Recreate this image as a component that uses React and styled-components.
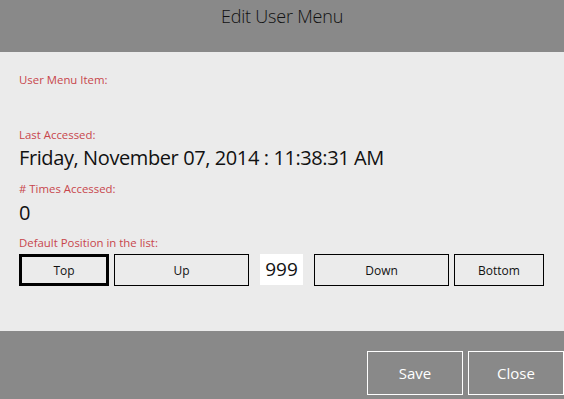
import React from "react";
import styled, { createGlobalStyle } from "styled-components";

const GlobalStyle = createGlobalStyle`
  html, body {
    margin: 0;
    padding: 0;
    background: #898989;
  }
  body {
    font-family: "Open Sans", "Noto Sans", sans-serif;
  }
`;

const Dialog = styled.div`
  width: 564px;
  height: 399px;
  display: flex;
  flex-direction: column;
  overflow: hidden;
`;

const Header = styled.div`
  height: 52px;
  background: #898989;
  display: flex;
  justify-content: center;
  box-sizing: border-box;
  padding-top: 4px;
`;

const Title = styled.h1`
  margin: 0;
  font-size: 18px;
  font-weight: 300;
  line-height: 24px;
  color: #111;
  letter-spacing: -0.2px;
`;

const Body = styled.div`
  height: 279px;
  background: #ebebeb;
  box-sizing: border-box;
  padding: 21px 19px 0;
  display: flex;
  flex-direction: column;
`;

const Label = styled.div`
  font-size: 11.4px;
  line-height: 14px;
  color: #c8464b;
  margin-top: ${(p) => p.$gap || 0}px;
`;

const Value = styled.div`
  font-size: 20px;
  line-height: 26px;
  letter-spacing: -0.4px;
  color: #111;
  margin-top: ${(p) => p.$gap || 3}px;
`;

const Row = styled.div`
  display: flex;
  align-items: flex-start;
  margin-top: 4px;
`;

const PosButton = styled.button`
  box-sizing: border-box;
  width: ${(p) => p.$w}px;
  height: 32px;
  margin-left: ${(p) => p.$ml || 0}px;
  background: #ebebeb;
  border: ${(p) => (p.$active ? "3px" : "1px")} solid #000;
  font-family: inherit;
  font-size: 12px;
  color: #111;
  padding: 0;
  cursor: pointer;
`;

const PosInput = styled.div`
  box-sizing: border-box;
  width: 43px;
  height: 31px;
  margin-left: 11px;
  background: #fff;
  font-size: 19px;
  line-height: 31px;
  text-align: center;
  color: #111;
`;

const Footer = styled.div`
  flex: 1;
  background: #898989;
  display: flex;
  justify-content: flex-end;
  align-items: flex-start;
  padding-top: 20px;
  gap: 5px;
`;

const FooterButton = styled.button`
  box-sizing: border-box;
  width: 96px;
  height: 44px;
  background: transparent;
  border: 1px solid #fff;
  color: #fff;
  font-family: inherit;
  font-size: 15px;
  padding: 0;
  cursor: pointer;
`;

export default function App() {
  return (
    <>
      <GlobalStyle />
      <Dialog>
        <Header>
          <Title>Edit User Menu</Title>
        </Header>
        <Body>
          <Label>User Menu Item:</Label>
          <Label $gap={41}>Last Accessed:</Label>
          <Value>Friday, November 07, 2014 : 11:38:31 AM</Value>
          <Label $gap={11}>&#35; Times Accessed:</Label>
          <Value $gap={4}>0</Value>
          <Label $gap={10}>Default Position in the list:</Label>
          <Row>
            <PosButton $w={90} $active>Top</PosButton>
            <PosButton $w={135} $ml={5}>Up</PosButton>
            <PosInput>999</PosInput>
            <PosButton $w={135} $ml={11}>Down</PosButton>
            <PosButton $w={90} $ml={5}>Bottom</PosButton>
          </Row>
        </Body>
        <Footer>
          <FooterButton>Save</FooterButton>
          <FooterButton>Close</FooterButton>
        </Footer>
      </Dialog>
    </>
  );
}
